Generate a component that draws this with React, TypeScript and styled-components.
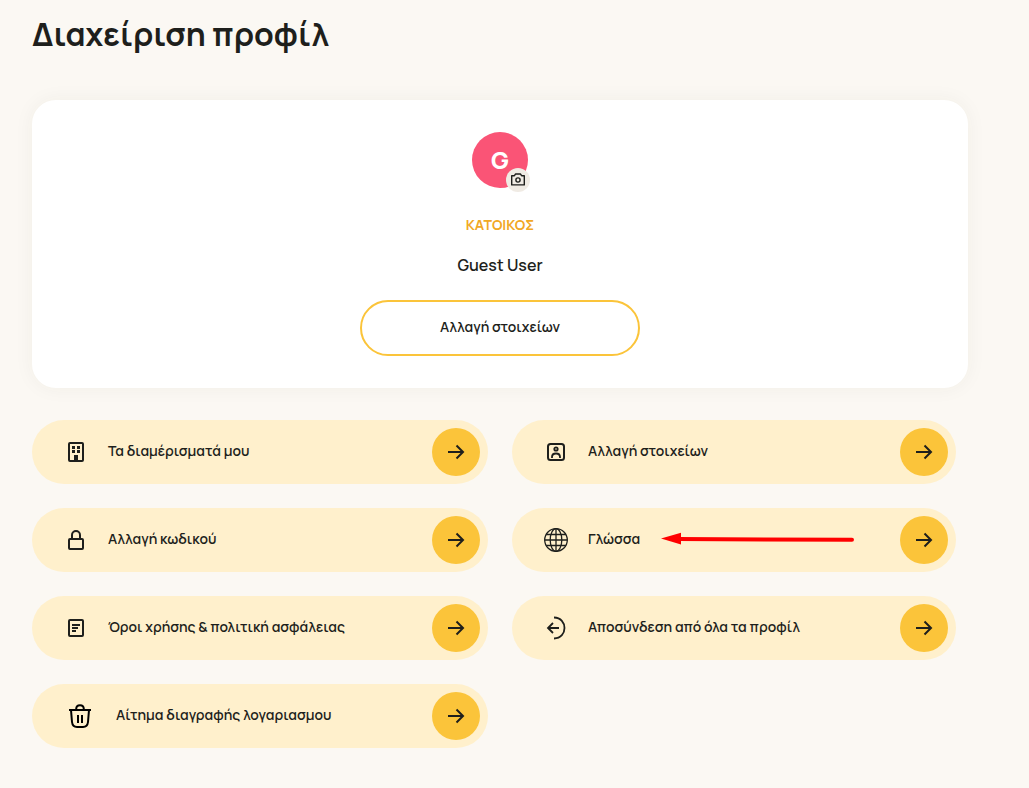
import React from "react";
import styled, { createGlobalStyle } from "styled-components";

const GlobalStyle = createGlobalStyle`
  *, *::before, *::after { box-sizing: border-box; }
  body {
    margin: 0;
    background: #fbf8f3;
    color: #1e1f1c;
    font-family: Manrope, Inter, "Noto Sans", sans-serif;
  }
  button { font: inherit; color: inherit; cursor: pointer; }
`;

const Page = styled.main`
  padding: 14px 61px 40px 32px;
`;

const Title = styled.h1`
  margin: 0 0 46px;
  font-size: 32px;
  line-height: 40px;
  font-weight: 700;
`;

const ProfileCard = styled.section`
  display: flex;
  flex-direction: column;
  align-items: center;
  padding: 32px;
  border-radius: 24px;
  background: #fff;
  box-shadow: 0 0 20px rgba(60, 50, 20, 0.05);
`;

const Avatar = styled.div`
  position: relative;
  display: flex;
  align-items: center;
  justify-content: center;
  width: 56px;
  height: 56px;
  border-radius: 50%;
  background: #fa5476;
  color: #fff;
  font-size: 24px;
  line-height: 32px;
  font-weight: 800;
`;

const PhotoButton = styled.button`
  position: absolute;
  right: -2px;
  bottom: -4px;
  display: flex;
  align-items: center;
  justify-content: center;
  width: 24px;
  height: 24px;
  padding: 0;
  border: 0;
  border-radius: 50%;
  background: #f0ebe4;
  color: #1e1f1c;
`;

const Role = styled.p`
  margin: 27px 0 0;
  color: #f1a825;
  font-size: 14px;
  line-height: 20px;
  font-weight: 700;
`;

const UserName = styled.p`
  margin: 16px 0 21px;
  font-size: 16px;
  line-height: 28px;
  font-weight: 600;
`;

const EditButton = styled.button`
  width: 280px;
  max-width: 100%;
  height: 56px;
  padding: 0 24px 2px;
  border: 2px solid #fbc43a;
  border-radius: 28px;
  background: #fff;
  font-size: 14px;
  line-height: 20px;
  font-weight: 600;
`;

const Menu = styled.nav`
  display: grid;
  grid-template-columns: 1fr 1fr;
  gap: 24px;
  margin-top: 32px;
`;

const MenuItem = styled.button`
  position: relative;
  display: flex;
  align-items: center;
  gap: 20px;
  height: 64px;
  padding: 0 8px 0 32px;
  border: 0;
  border-radius: 32px;
  background: #fff0cc;
  text-align: left;

  &:nth-child(even) { margin-right: 12px; }
`;

const Label = styled.span`
  flex: 1;
  padding-bottom: 2px;
  font-size: 14px;
  line-height: 20px;
  font-weight: 600;
`;

const ArrowDisc = styled.span`
  display: flex;
  align-items: center;
  justify-content: center;
  width: 48px;
  height: 48px;
  border-radius: 50%;
  background: #fbc43a;
`;

const Pointer = styled.svg`
  position: absolute;
  left: 148px;
  top: 24px;
`;

type IconProps = { size?: number; children: React.ReactNode };

const Icon = ({ size = 24, children }: IconProps) => (
  <svg width={size} height={size} viewBox={`0 0 ${size} ${size}`} fill="none" stroke="#1e1f1c" strokeWidth="2" aria-hidden="true">
    {children}
  </svg>
);

const CameraIcon = () => (
  <svg width="16" height="16" viewBox="0 0 16 16" fill="none" stroke="currentColor" strokeWidth="1.4" strokeLinejoin="round" aria-hidden="true">
    <path d="M1.7 3.7H4.4L5.6 2H10.4L11.6 3.7H14.3V12.9H1.7Z" />
    <circle cx="8" cy="8" r="2.1" />
  </svg>
);

const BuildingIcon = () => (
  <Icon>
    <rect x="5" y="3" width="14" height="18" rx="1" />
    <path d="M8 6h3v3H8zM13 6h3v3h-3zM8 10h3v3H8zM13 10h3v3h-3zM10 15h4v6h-4z" fill="#1e1f1c" stroke="none" />
  </Icon>
);

const PersonIcon = () => (
  <Icon>
    <rect x="4" y="4" width="16" height="16" rx="2.5" />
    <circle cx="12" cy="9" r="1.7" strokeWidth="1.8" />
    <path d="M8 18V17C8 12.3 16 12.3 16 17V18" strokeWidth="1.8" />
  </Icon>
);

const LockIcon = () => (
  <Icon>
    <rect x="5" y="11" width="14" height="10" rx="1" />
    <path d="M8 11V7A4 4 0 0 1 16 7V11" />
  </Icon>
);

const GlobeIcon = () => (
  <Icon>
    <g strokeWidth="1.3">
      <circle cx="12" cy="12" r="11.3" />
      <ellipse cx="12" cy="12" rx="5.8" ry="11.3" />
      <path d="M12 .6V23.4M.6 12H23.4M2.2 6.5H21.8M2.2 17.5H21.8" />
    </g>
  </Icon>
);

const DocumentIcon = () => (
  <Icon>
    <rect x="5" y="4" width="14" height="16" rx="1" />
    <path d="M8 9H16M8 12H14M8 15H12" strokeWidth="1.8" />
  </Icon>
);

const LogoutIcon = () => (
  <Icon>
    <path d="M10 1.5C24 1.5 24 22.5 10 22.5" strokeWidth="1.8" />
    <path d="M15 12H4M9 7L4 12L9 17" strokeWidth="1.8" />
  </Icon>
);

const TrashIcon = () => (
  <Icon size={32}>
    <g stroke="#000">
      <path d="M5 10H27M12.2 10V9C12.2 4 19.8 4 19.8 9V10" />
      <path d="M7 10L8 22C8.4 25.6 10 27 13 27H19C22 27 23.6 25.6 24 22L25 10M14 15V23M18 15V23" />
    </g>
  </Icon>
);

const ArrowIcon = () => (
  <Icon>
    <path d="M4 12H19M12.5 5.5L19 12L12.5 18.5" />
  </Icon>
);

const items = [
  { label: "Τα διαμέρισματά μου", icon: <BuildingIcon /> },
  { label: "Αλλαγή στοιχείων", icon: <PersonIcon /> },
  { label: "Αλλαγή κωδικού", icon: <LockIcon /> },
  { label: "Γλώσσα", icon: <GlobeIcon />, highlighted: true },
  { label: "Όροι χρήσης & πολιτική ασφάλειας", icon: <DocumentIcon /> },
  { label: "Αποσύνδεση από όλα τα προφίλ", icon: <LogoutIcon /> },
  { label: "Αίτημα διαγραφής λογαριασμου", icon: <TrashIcon /> },
];

export default function App() {
  return (
    <>
      <GlobalStyle />
      <Page>
        <Title>Διαχείριση προφίλ</Title>
        <ProfileCard>
          <Avatar>
            G
            <PhotoButton type="button" aria-label="Αλλαγή φωτογραφίας">
              <CameraIcon />
            </PhotoButton>
          </Avatar>
          <Role>ΚΑΤΟΙΚΟΣ</Role>
          <UserName>Guest User</UserName>
          <EditButton type="button">Αλλαγή στοιχείων</EditButton>
        </ProfileCard>
        <Menu>
          {items.map(({ label, icon, highlighted }) => (
            <MenuItem type="button" key={label}>
              {icon}
              <Label>{label}</Label>
              {highlighted && (
                <Pointer width="196" height="16" viewBox="0 0 196 16" aria-hidden="true">
                  <path d="M18 7L192 7.8" stroke="#f00" strokeWidth="4" strokeLinecap="round" />
                  <path d="M1 6.6L21 .8V12.6Z" fill="#f00" />
                </Pointer>
              )}
              <ArrowDisc>
                <ArrowIcon />
              </ArrowDisc>
            </MenuItem>
          ))}
        </Menu>
      </Page>
    </>
  );
}
